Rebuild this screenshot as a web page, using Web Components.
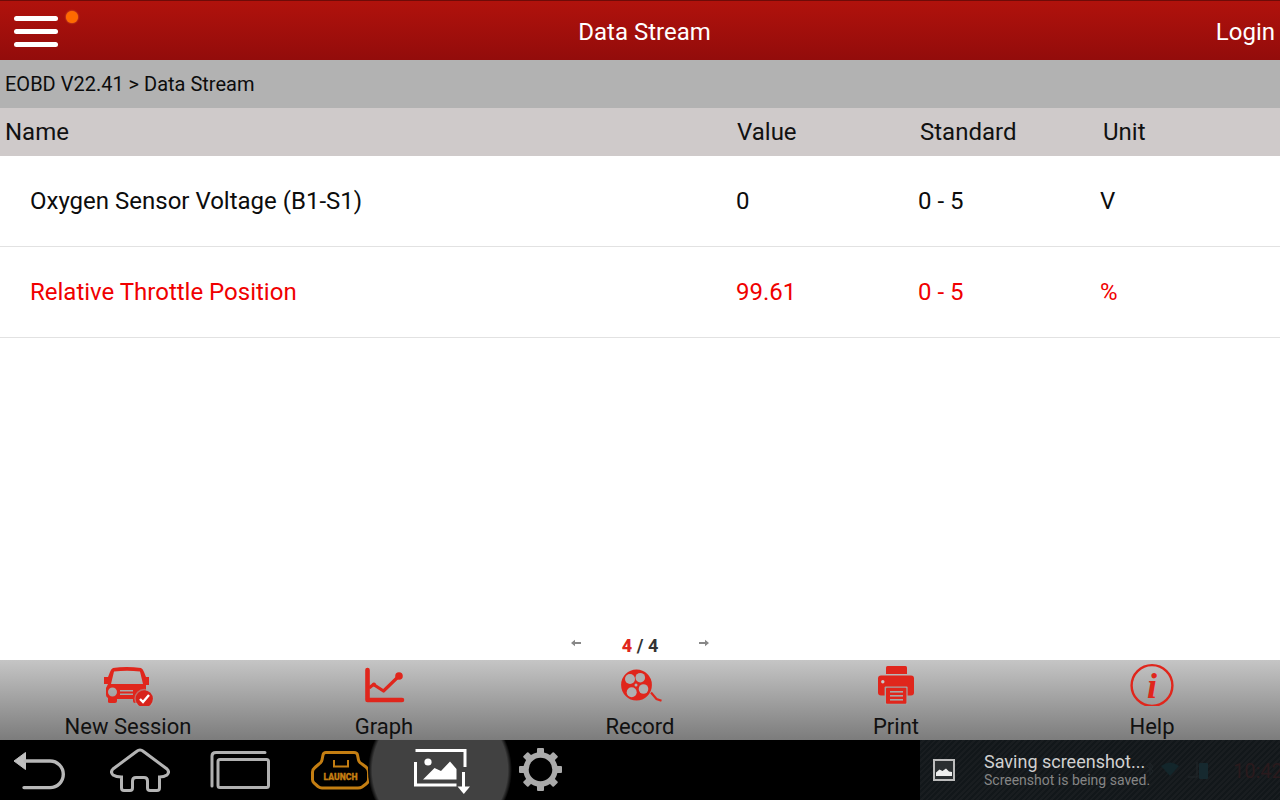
<!DOCTYPE html>
<html>
<head>
<meta charset="utf-8">
<title>Data Stream</title>
<style>
    html, body { margin: 0; padding: 0; }
    body { width: 1280px; height: 800px; overflow: hidden; font-family: Roboto, "Liberation Sans", sans-serif; background: #fff; }
</style>
</head>
<body>
<app-shell>
    <app-header title-text="Data Stream" login="Login"></app-header>
    <bread-crumb>EOBD V22.41 &gt; Data Stream</bread-crumb>
    <table-head></table-head>
    <data-row name="Oxygen Sensor Voltage (B1-S1)" value="0" standard="0 - 5" unit="V"></data-row>
    <data-row alert name="Relative Throttle Position" value="99.61" standard="0 - 5" unit="%"></data-row>
    <page-bar current="4" total="4"></page-bar>
    <tool-bar>
        <tool-item label="New Session">
            <svg viewBox="96 662 64 44" width="64" height="44">
                <path fill="#e0261c" fill-rule="evenodd" d="M113 668 Q126 666 141 668 Q143 669 144 672 L146 677 H149 V685 H146 V697 Q146 699 144 699 H142 V702 Q142 703 140 703 H135 Q133 703 133 701 V699 H117 V701 Q117 703 115 703 H110 Q108 703 108 702 V698 Q106 697 106 695 V688 L108 684 H104 V677 H108 L110 672 Q111 669 113 668 Z M114 671.5 L111 684 H143 L140 671.5 Q127 670 114 671.5 Z M112.5 687.5 A4.5 4.5 0 1 0 112.5 696.5 A4.5 4.5 0 1 0 112.5 687.5 Z M120 690 V691.5 H133 V690 Z M120 693.5 V695 H133 V693.5 Z"/>
                <circle cx="144.3" cy="698.8" r="10" fill="#a8a8a8" opacity=".55"/>
                <circle cx="144.3" cy="698.8" r="8.6" fill="#d8231b"/>
                <path d="M140 699 L143 702 L149 695" fill="none" stroke="#fff" stroke-width="2.4"/>
            </svg>
        </tool-item>
        <tool-item label="Graph">
            <svg viewBox="352 662 64 44" width="64" height="44">
                <path d="M367.5 670 V700 H402" fill="none" stroke="#e0261c" stroke-width="4.6" stroke-linecap="round" stroke-linejoin="round"/>
                <path d="M369 688 L373.5 684.5 L383.5 691 L399 676" fill="none" stroke="#e0261c" stroke-width="3.2" stroke-linejoin="round"/>
                <circle cx="399" cy="676" r="3.8" fill="#e0261c"/>
                <circle cx="374" cy="684.5" r="2" fill="#e0261c"/>
            </svg>
        </tool-item>
        <tool-item label="Record">
            <svg viewBox="608 662 64 44" width="64" height="44">
                <circle cx="636.5" cy="685" r="15.4" fill="#e0261c"/>
                <g fill="#b0b0b0">
                    <circle cx="630" cy="679" r="5"/>
                    <circle cx="640.3" cy="677.7" r="4.8"/>
                    <circle cx="643.5" cy="689" r="4.8"/>
                    <circle cx="631.7" cy="692.3" r="5"/>
                    <circle cx="636" cy="685" r="1.5"/>
                </g>
                <path d="M651 692.5 L656.5 699 L661.5 700.8" fill="none" stroke="#e0261c" stroke-width="2.2"/>
            </svg>
        </tool-item>
        <tool-item label="Print">
            <svg viewBox="864 662 64 44" width="64" height="44">
                <path fill="#e0261c" d="M886 667.5 Q886 666 887.5 666 H905.5 Q907 666 907 667.5 V674 H886 Z"/>
                <rect x="878" y="675.5" width="36" height="20" rx="3" fill="#e0261c"/>
                <circle cx="882.8" cy="681.8" r="1.7" fill="#c9c9c9"/>
                <rect x="884.6" y="686.4" width="23" height="18.2" rx="1" fill="#a4a4a4"/>
                <rect x="886" y="687.8" width="20.4" height="16" rx="1" fill="#e0261c"/>
                <g fill="#a8a8a8">
                    <rect x="890" y="691" width="13" height="1.6"/>
                    <rect x="890" y="695" width="13" height="1.6"/>
                    <rect x="890" y="699" width="13" height="1.6"/>
                </g>
            </svg>
        </tool-item>
        <tool-item label="Help">
            <svg viewBox="1120 662 64 44" width="64" height="44">
                <circle cx="1152" cy="685.5" r="20.4" fill="none" stroke="#e0261c" stroke-width="2.4"/>
                <text x="1152" y="698" text-anchor="middle" font-family="Liberation Serif, serif" font-style="italic" font-weight="700" font-size="36" fill="#e0261c">i</text>
            </svg>
        </tool-item>
    </tool-bar>
    <nav-bar>
        <nav-icon>
            <svg viewBox="10 740 60 60" width="60" height="60">
                <path d="M14 761 L25.5 752.5 V769.5 Z" fill="#c0c0c0" stroke="#c0c0c0" stroke-width="1" stroke-linejoin="round"/>
                <path d="M25 761 H50 A13.2 13.2 0 0 1 50 787.6 H24" fill="none" stroke="#b8b8b8" stroke-width="3.4" stroke-linecap="round"/>
            </svg>
        </nav-icon>
        <nav-icon>
            <svg viewBox="110 740 60 60" width="60" height="60">
                <path d="M136.5 751.5 Q140 748.5 143.5 751.5 L167 769 Q170 772 167 775 Q164 777 159.5 777 V788 Q159.5 790.5 157 790.5 H150 Q147.5 790.5 147.5 788 V781 Q147.5 777.5 144 777.5 H136 Q132.5 777.5 132.5 781 V788 Q132.5 790.5 130 790.5 H124 Q121.5 790.5 121.5 788 V777 Q116 777 113 775 Q110 772 113 769 Z" fill="none" stroke="#b4b4b4" stroke-width="3"/>
            </svg>
        </nav-icon>
        <nav-icon>
            <svg viewBox="210 740 60 60" width="60" height="60">
                <path d="M212 786 V756 Q212 752.5 216 752.5 H265" fill="none" stroke="#b0b0b0" stroke-width="3" stroke-linecap="round"/>
                <rect x="218" y="759.5" width="50.5" height="28" rx="2" fill="none" stroke="#b0b0b0" stroke-width="3"/>
            </svg>
        </nav-icon>
        <nav-icon>
            <svg viewBox="310 740 60 60" width="60" height="60">
                <path d="M326 752.5 H354 Q357 752.5 357.5 755 L358.5 760 Q359 762.5 362 764 L366 767 Q368.5 769 368.5 772 V780 Q368.5 782 366 784 L362 787 Q360.5 788 358 788 H322 Q320 788 318 786.5 L314 783 Q312.5 781.5 312.5 779.5 V772 Q312.5 769.5 315 767.5 L319 764 Q321.5 762.5 322 760 L323 755 Q323.5 752.5 326 752.5 Z" fill="none" stroke="#c47e12" stroke-width="3"/>
                <path d="M334 760 V766.5 H348 V760" fill="none" stroke="#c47e12" stroke-width="2"/>
                <text x="340.5" y="779.5" text-anchor="middle" font-family="Roboto, sans-serif" font-weight="900" font-size="8.6" fill="#c47e12" stroke="#c47e12" stroke-width=".3">LAUNCH</text>
            </svg>
        </nav-icon>
        <nav-icon active>
            <svg viewBox="410 740 60 60" width="60" height="60">
                <path d="M415.5 750.5 H465 V767" fill="none" stroke="#fff" stroke-width="3"/>
                <path d="M415.5 762 V785 H456.5" fill="none" stroke="#fff" stroke-width="3"/>
                <circle cx="428" cy="762" r="3.6" fill="#fff"/>
                <path d="M423 779.5 L434.5 768 L441 771 L450 761.5 L456.5 769 V779.5 Z" fill="#fff"/>
                <path d="M463.5 772 V787" fill="none" stroke="#fff" stroke-width="3"/>
                <path d="M457.5 786.5 H470 L463.8 794 Z" fill="#fff"/>
            </svg>
        </nav-icon>
        <nav-icon>
            <svg viewBox="510 740 60 60" width="60" height="60">
                <g fill="#aaa">
                    <rect x="537" y="748" width="7" height="43" rx="1"/>
                    <rect x="537" y="748" width="7" height="43" rx="1" transform="rotate(45 540.5 769.5)"/>
                    <rect x="537" y="748" width="7" height="43" rx="1" transform="rotate(90 540.5 769.5)"/>
                    <rect x="537" y="748" width="7" height="43" rx="1" transform="rotate(135 540.5 769.5)"/>
                </g>
                <circle cx="540.5" cy="769.5" r="14.5" fill="#000" stroke="#aaa" stroke-width="5.4"/>
            </svg>
        </nav-icon>
        <ticker-note title-text="Saving screenshot..." sub-text="Screenshot is being saved." time="10:42"></ticker-note>
    </nav-bar>
</app-shell>

<script>
class AppShell extends HTMLElement {
    constructor() {
        super();
        this.attachShadow({ mode: 'open' });
        this.shadowRoot.innerHTML = `
            <style>
                :host { display: flex; flex-direction: column; width: 1280px; height: 800px; background: #fff; }
            </style>
            <slot></slot>
        `;
    }
}

class AppHeader extends HTMLElement {
    constructor() {
        super();
        this.attachShadow({ mode: 'open' });
        this.shadowRoot.innerHTML = `
            <style>
                :host {
                    display: grid;
                    grid-template-columns: 1fr auto 1fr;
                    align-items: center;
                    height: 60px;
                    box-sizing: border-box;
                    padding: 2px 5px 0 14px;
                    color: #fff;
                    font-size: 24px;
                    background: linear-gradient(#b0120c, #930c0b);
                    border-top: 1px solid #6e0b08;
                }
                .menu { position: relative; display: flex; flex-direction: column; gap: 8px; width: 44px; margin-top: -1px; }
                .menu i { display: block; height: 5px; background: #fff; border-radius: 2.5px; }
                .dot {
                    position: absolute;
                    left: 51.5px;
                    top: -4.5px;
                    width: 12px;
                    height: 12px;
                    border-radius: 50%;
                    background: #ff6a00;
                    box-shadow: 0 0 2px #ff8a30;
                }
                .login { justify-self: end; }
            </style>
            <div class="menu"><i></i><i></i><i></i><span class="dot"></span></div>
            <div class="title"></div>
            <div class="login"></div>
        `;
    }
    connectedCallback() {
        this.shadowRoot.querySelector('.title').textContent = this.getAttribute('title-text');
        this.shadowRoot.querySelector('.login').textContent = this.getAttribute('login');
    }
}

class BreadCrumb extends HTMLElement {
    constructor() {
        super();
        this.attachShadow({ mode: 'open' });
        this.shadowRoot.innerHTML = `
            <style>
                :host {
                    display: flex;
                    align-items: center;
                    height: 48px;
                    padding-left: 5px;
                    font-size: 20px;
                    color: #0c0c0c;
                    background: #b2b2b2;
                }
            </style>
            <slot></slot>
        `;
    }
}

class TableHead extends HTMLElement {
    constructor() {
        super();
        this.attachShadow({ mode: 'open' });
        this.shadowRoot.innerHTML = `
            <style>
                :host {
                    display: grid;
                    grid-template-columns: 732px 183px 183px 1fr;
                    align-items: center;
                    height: 48px;
                    padding-left: 5px;
                    font-size: 24px;
                    color: #111;
                    background: #cfcaca;
                }
            </style>
            <div>Name</div><div>Value</div><div>Standard</div><div>Unit</div>
        `;
    }
}

class DataRow extends HTMLElement {
    constructor() {
        super();
        this.attachShadow({ mode: 'open' });
        this.shadowRoot.innerHTML = `
            <style>
                :host {
                    display: grid;
                    grid-template-columns: 706px 182px 182px 1fr;
                    align-items: center;
                    height: 91px;
                    box-sizing: border-box;
                    padding-left: 30px;
                    font-size: 24px;
                    color: #0c0c0c;
                    background: #fff;
                    border-bottom: 1px solid #e2e2e2;
                }
                :host([alert]) { color: #f00000; }
            </style>
            <div id="name"></div><div id="value"></div><div id="standard"></div><div id="unit"></div>
        `;
    }
    connectedCallback() {
        for (const key of ['name', 'value', 'standard', 'unit']) {
            this.shadowRoot.getElementById(key).textContent = this.getAttribute(key);
        }
    }
}

class PageBar extends HTMLElement {
    constructor() {
        super();
        this.attachShadow({ mode: 'open' });
        this.shadowRoot.innerHTML = `
            <style>
                :host {
                    display: flex;
                    justify-content: center;
                    align-items: flex-start;
                    flex: 1;
                    box-sizing: border-box;
                    padding: 295px 0 0 0;
                    font-size: 18px;
                    font-weight: 700;
                    color: #333;
                }
                .inner { display: flex; align-items: center; height: 24px; }
                .count { width: 118px; text-align: center; }
                .count b { color: #e0261c; }
                svg { display: block; margin-top: -4px; }
            </style>
            <div class="inner">
                <svg width="10" height="8" viewBox="0 0 10 8"><path d="M0 4 L4 .8 V3 H10 V5 H4 V7.2 Z" fill="#888"/></svg>
                <div class="count"><b></b> / <span></span></div>
                <svg width="10" height="8" viewBox="0 0 10 8"><path d="M10 4 L6 .8 V3 H0 V5 H6 V7.2 Z" fill="#888"/></svg>
            </div>
        `;
    }
    connectedCallback() {
        this.shadowRoot.querySelector('b').textContent = this.getAttribute('current');
        this.shadowRoot.querySelector('span').textContent = this.getAttribute('total');
    }
}

class ToolBar extends HTMLElement {
    constructor() {
        super();
        this.attachShadow({ mode: 'open' });
        this.shadowRoot.innerHTML = `
            <style>
                :host {
                    display: grid;
                    grid-template-columns: repeat(5, 1fr);
                    height: 80px;
                    flex: none;
                    background: linear-gradient(#c5c5c5, #7c7c7c);
                }
            </style>
            <slot></slot>
        `;
    }
}

class ToolItem extends HTMLElement {
    constructor() {
        super();
        this.attachShadow({ mode: 'open' });
        this.shadowRoot.innerHTML = `
            <style>
                :host {
                    display: flex;
                    flex-direction: column;
                    align-items: center;
                    padding-top: 2px;
                    font-size: 22px;
                    color: #111;
                    overflow: hidden;
                }
                ::slotted(svg) { display: block; }
                .label { line-height: 26px; margin-top: 8px; }
            </style>
            <slot></slot>
            <div class="label"></div>
        `;
    }
    connectedCallback() {
        this.shadowRoot.querySelector('.label').textContent = this.getAttribute('label');
    }
}

class NavBar extends HTMLElement {
    constructor() {
        super();
        this.attachShadow({ mode: 'open' });
        this.shadowRoot.innerHTML = `
            <style>
                :host {
                    display: flex;
                    gap: 40px;
                    height: 60px;
                    flex: none;
                    padding-left: 10px;
                    background: #000;
                    overflow: hidden;
                }
            </style>
            <slot></slot>
        `;
    }
}

class NavIcon extends HTMLElement {
    constructor() {
        super();
        this.attachShadow({ mode: 'open' });
        this.shadowRoot.innerHTML = `
            <style>
                :host { display: block; position: relative; width: 60px; height: 60px; flex: none; }
                :host([active])::before {
                    content: '';
                    position: absolute;
                    left: -42px;
                    top: -42px;
                    width: 144px;
                    height: 144px;
                    border-radius: 50%;
                    background: radial-gradient(circle closest-side, #414141 94%, #000 100%);
                }
                ::slotted(svg) { display: block; position: relative; }
            </style>
            <slot></slot>
        `;
    }
}

class TickerNote extends HTMLElement {
    constructor() {
        super();
        this.attachShadow({ mode: 'open' });
        this.shadowRoot.innerHTML = `
            <style>
                :host {
                    display: flex;
                    align-items: center;
                    position: absolute;
                    right: 0;
                    width: 360px;
                    height: 60px;
                    box-sizing: border-box;
                    padding-left: 13px;
                    color: #d0d0d0;
                    background: repeating-linear-gradient(135deg, #12171a 0 2px, #191d20 2px 4px);
                }
                .pic { flex: none; display: block; margin-right: 29px; }
                .text { position: relative; margin-top: -1px; }
                .title { font-size: 18px; line-height: 21px; }
                .sub { font-size: 14px; line-height: 17px; color: #858585; }
                .status { position: absolute; top: 0; left: 0; width: 360px; height: 60px; }
                .time { position: absolute; left: 313px; top: 19px; font-size: 20px; color: #2a1a1d; }
            </style>
            <div class="status">
                <svg width="360" height="60" viewBox="920 740 360 60" style="position:absolute;left:0;top:0">
                    <path d="M1147 766 L1153 771 L1150 775 V763 L1153 767 L1147 772" fill="none" stroke="#1f2528" stroke-width="1"/>
                    <path d="M1161 766 Q1170 759 1179 766 L1170 776 Z" fill="#13262b"/>
                    <path d="M1188 777 H1197 V762" fill="none" stroke="#23282a" stroke-width="1"/>
                    <rect x="1199" y="763" width="9" height="16" rx="1" fill="#16292f"/>
                </svg>
                <span class="time"></span>
            </div>
            <svg class="pic" width="22" height="22" viewBox="0 0 22 22">
                <rect x="1" y="1" width="20" height="20" fill="#2b2f31" stroke="#bdbdbd" stroke-width="2"/>
                <path d="M3 17 V13.5 L6.5 10.5 L9.5 12 L13 9.5 L16 12.5 L19 13 V17 Z" fill="#eee"/>
            </svg>
            <div class="text"><div class="title"></div><div class="sub"></div></div>
        `;
    }
    connectedCallback() {
        this.shadowRoot.querySelector('.title').textContent = this.getAttribute('title-text');
        this.shadowRoot.querySelector('.sub').textContent = this.getAttribute('sub-text');
        this.shadowRoot.querySelector('.time').textContent = this.getAttribute('time');
    }
}

customElements.define('app-shell', AppShell);
customElements.define('app-header', AppHeader);
customElements.define('bread-crumb', BreadCrumb);
customElements.define('table-head', TableHead);
customElements.define('data-row', DataRow);
customElements.define('page-bar', PageBar);
customElements.define('tool-bar', ToolBar);
customElements.define('tool-item', ToolItem);
customElements.define('nav-bar', NavBar);
customElements.define('nav-icon', NavIcon);
customElements.define('ticker-note', TickerNote);
</script>
</body>
</html>
